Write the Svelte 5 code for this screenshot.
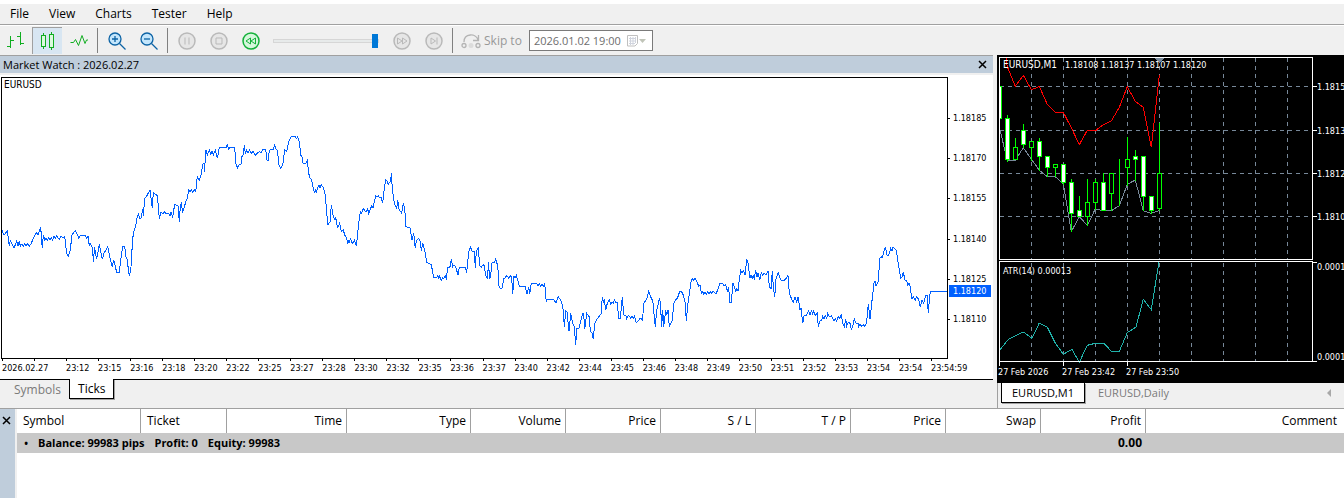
<script>
  // Traced samples, three units to a pixel, each run with its own origin.
  const runs = [
    { x: 0, y: 110, pts: '6,361 12,375 22,362 28,408 31,392 42,415 50,392 54,408 58,392 61,408 66,402 70,408 74,402 78,408 82,402 88,408 94,400 103,378 110,368 114,374 122,352 127,415 130,375 134,390 138,384 142,390 146,384 150,390 154,384 158,390 162,378 166,384 170,378 174,384 178,388 183,378 188,383 194,380 200,430 205,438 211,420 216,374 226,362 230,370 236,384 240,377 256,377 260,384 264,377 268,408 270,400 276,410 281,457 283,410 290,448 298,402 307,447 312,430 323,410 330,443 337,470 341,450 350,487 358,487 362,450 368,410 374,410 378,440 382,448 386,490 389,496 393,470 398,385 402,362 407,350 410,328 415,312 420,328 424,322 428,296 430,318 434,266 440,258 450,240 457,295 460,247 472,257 476,300 478,328 483,305 488,311 493,306 498,311 506,311 510,318 513,307 518,320 524,283 535,288 538,337 541,288 544,282 548,304 553,292 558,272 562,265 566,240 570,247 574,239 578,247 583,240 587,245 592,200 598,210 604,193 608,162 612,160 613,185 618,120 622,135 628,120 632,133 636,122 640,135 646,120 650,140 653,142 658,113 678,113 682,104 686,117 690,113 704,113 708,163 713,174 718,163 724,162 726,140 730,134 733,104 736,130 740,120 744,130 748,120 754,130 760,124 766,136 772,130 778,125 783,128 788,119 797,119 801,150 805,150 808,122 814,118 820,118 824,104 828,118 832,120 837,165 842,174 848,165 854,120 860,125 866,95 872,82 878,78 886,80 890,86 893,80 898,95 902,135 906,140 909,160 918,160 922,152 926,190 930,205 935,210 940,235 943,247 946,240 949,247 954,230 957,226' },
    { x: 320, y: 120, pts: '0,203 4,194 10,203 16,225 20,280 24,314 30,306 34,256 40,290 45,300 47,290 52,322 55,320 59,308 64,336 70,330 74,345 80,355 83,371 86,360 88,370 91,356 96,368 99,370 103,360 109,379 113,340 116,310 121,275 124,280 130,266 136,274 140,274 143,266 146,280 150,270 155,258 159,264 162,250 167,227 171,232 175,228 179,233 184,233 188,250 191,220 197,179 201,182 205,193 212,183 214,160 217,205 221,240 225,255 230,264 233,240 237,268 245,280 250,250 254,265 258,320 270,323 276,360 281,338 286,385 289,362 296,355 301,366 304,393 308,370 314,390 320,427 334,434 341,472 350,474 353,467 356,475 359,467 364,481 368,474 372,475 376,468 379,475 383,443 391,440 394,418 398,440 402,434 408,443 414,466 418,442 436,443 440,458 446,395 452,380 456,394 463,394 466,443 469,392 475,385 479,438 484,442 489,434 493,438 497,466 502,474 506,426 508,475 511,474 516,428 524,426 527,418 530,430 533,430 536,495 541,506 547,504 551,475 556,474 560,466 566,474 570,467 575,472 578,523 582,468 585,475 589,466 594,482 598,500 616,500 621,523 626,500 629,523 634,490 650,491 654,499 658,491 662,499 666,491 670,499 674,491 679,547 682,538 702,540 708,548 715,530 720,538 725,548 730,572 733,620 737,572 741,575 747,634 752,580 758,610 763,620 767,676 770,625 777,625 782,605 788,580 791,582 794,628 800,580 804,586 808,590 811,634 816,640 820,658 824,610 832,596 844,580 847,530 850,548 853,536 857,570 862,550 868,540 872,553 876,546 880,550 883,540 887,548 892,548 896,595 901,595 907,530 911,585 918,587 920,596 924,587 928,588 932,595 936,587 940,595 943,588 949,608 954,604 960,595 966,598 967,604 972,548 980,538' },
    { x: 640, y: 220, pts: '26,214 35,238 38,240 43,290 46,320 50,270 58,238 61,245 65,320 68,270 71,320 77,270 80,285 84,270 88,320 92,312 97,300 101,250 107,238 112,236 119,214 124,214 130,225 136,250 139,304 143,255 149,215 154,180 158,176 161,182 165,175 170,185 176,198 180,195 184,220 188,215 191,222 195,215 199,222 203,215 207,222 211,215 215,220 220,214 228,222 233,210 240,190 248,190 252,197 257,193 262,213 266,202 269,247 274,247 279,190 283,200 287,214 290,206 294,214 298,180 302,152 306,158 311,152 315,166 320,118 325,130 329,175 333,166 337,174 340,168 343,175 347,151 351,170 354,158 359,180 364,158 368,167 372,158 378,165 384,152 388,200 393,206 397,152 400,200 404,230 408,178 415,158 420,175 424,181 432,181 439,174 444,166 448,218 454,235 460,247 465,230 470,246 474,230 480,270 483,264 488,310 492,288 498,287 506,272 510,284 514,272 518,282 521,272 526,286 532,280 535,320 540,302 545,300 548,288 552,296 556,288 560,296 563,280 568,290 574,288 582,303 586,295 590,303 595,290 600,295 604,282 608,310 613,320 617,296 620,318 625,306 630,310 634,328 638,320 643,296 648,310 654,310 656,320 660,312 665,320 670,313 674,320 678,312 680,305 685,252 690,297 695,250 702,190 705,182 708,198 714,185 720,115 724,110 726,115 730,102 736,80 742,108 746,106 752,85 756,92 759,80 762,84 768,90 772,110 777,145 782,175 786,172 790,157 795,180 800,182 803,195 807,190 810,197 816,238 820,230 826,240 830,230 836,238 841,262 846,240 851,250 857,225 861,225 865,280 869,225 873,214 922,214' }
  ];
  const place = (pts, dx, dy) =>
    pts.split(' ').map((p) => {
      const [x, y] = p.split(',').map(Number);
      return `${(x / 3 + dx).toFixed(1)},${(y / 3 + dy).toFixed(1)}`;
    }).join(' ');
  const tickLine = runs.map((r) => place(r.pts, r.x - 2, r.y - 78)).join(' ');

  const prices = [
    ['1.18185', 41], ['1.18170', 81], ['1.18155', 121], ['1.18140', 162], ['1.18125', 202], ['1.18110', 242]
  ];
  const times = ['2026.02.27', '', '23:12', '23:15', '23:16', '23:18', '23:20', '23:22', '23:25', '23:27', '23:28', '23:30', '23:32', '23:35', '23:36', '23:37', '23:40', '23:42', '23:44', '23:45', '23:46', '23:48', '23:49', '23:50', '23:51', '23:52', '23:53', '23:54', '23:54', '23:54:59'];

  // [bodyTop, bodyBottom, wickTop, wickBottom, bearish]
  const candles = [
    [31, 63, 31, 63, 1], [63, 104, 60, 106, 1], [92, 104, 83, 104, 0], [75, 89, 69, 92, 1], [86, 92, 86, 105, 0],
    [86, 101, 83, 115, 1], [101, 112, 101, 121, 1], [109, 112, 109, 121, 0], [109, 127, 109, 129, 1], [127, 158, 124, 176, 1],
    [155, 161, 141, 161, 1], [147, 161, 124, 170, 0], [127, 147, 124, 154, 0], [127, 155, 118, 155, 1], [118, 138, 118, 155, 0],
    [118, 118, 104, 150, 0], [104, 112, 82, 130, 0], [101, 104, 95, 125, 1], [101, 141, 101, 155, 1], [141, 155, 141, 158, 1], [118, 153, 68, 155, 0]
  ];
  const upper = place('48,25 52,50 76,109 100,76 124,119 136,115 148,109 172,163 196,187 220,187 244,233 268,284 292,241 318,241 340,224 364,213 388,172 412,110 436,154 460,172 484,292 508,76', -7, -5);
  const lower = place('30,240 52,331 76,331 100,293 148,361 172,380 196,380 220,401 244,545 268,500 292,526 316,477 340,482 364,482 388,467 412,403 436,390 460,482 484,490 508,482', -7, -5);
  const atr = place('28,287 54,254 100,231 126,250 148,204 172,216 196,264 220,298 246,283 268,322 292,271 316,265 342,265 364,289 388,289 412,233 438,216 460,133 484,164 507,20', -7, 200);
  const gridX = [34, 66, 98, 130, 162, 194, 226, 258, 290];
  const gridY = [[31, '1.1815'], [75, '1.1813'], [118, '1.1812'], [161, '1.1810']];

  const menus = ['File', 'View', 'Charts', 'Tester', 'Help'];
  const columns = ['Symbol', 'Ticket', 'Time', 'Type', 'Volume', 'Price', 'S / L', 'T / P', 'Price', 'Swap', 'Profit', 'Comment'];
  let speed = $state(100);
  let skipTo = $state('2026.01.02 19:00');
</script>

<div class="app">
  <nav class="menu">
    {#each menus as m}<button>{m}</button>{/each}
  </nav>

  <div class="toolbar">
    <button class="tool" aria-label="Bar chart">
      <svg width="20" height="20" viewBox="0 0 20 20" class="green crisp"><path d="M4.500 5v12M1 15.500h3M5 9.500h3M14.500 1v13M11 5.500h3M15 12.500h3" /></svg>
    </button>
    <button class="tool active" aria-label="Candlesticks">
      <svg width="20" height="20" viewBox="0 0 20 20" class="green crisp body"><path d="M5.500 2v3M5.500 15v3M3.500 4.500h4v11h-4zM13.500 1v3M13.500 16v3M11.500 3.500h4v13h-4z" /></svg>
    </button>
    <button class="tool" aria-label="Line chart">
      <svg width="20" height="20" viewBox="0 0 20 20" class="green"><path d="M1.500 11.500h3l2-3 3 6 3.500-10 3 8 1.500-3.500h1.500" /></svg>
    </button>
    <span class="sep"></span>
    {#each ['Zoom in', 'Zoom out'] as label, i}
      <button class="tool" aria-label={label}>
        <svg width="20" height="20" viewBox="0 0 20 20" class="zoom">
          <path d="M12.500 12.500l6 6" />
          <circle cx="8" cy="8" r="6" />
          <path d={i ? 'M5 8h6' : 'M5 8h6M8 5v6'} />
        </svg>
      </button>
    {/each}
    <span class="sep"></span>
    <button class="tool" aria-label="Pause">
      <svg width="20" height="20" viewBox="0 0 20 20" class="round"><circle cx="10" cy="10" r="8" /><path d="M8 6.500v7M12 6.500v7" /></svg>
    </button>
    <button class="tool" aria-label="Stop">
      <svg width="20" height="20" viewBox="0 0 20 20" class="round"><circle cx="10" cy="10" r="8" /><path d="M7 7h6v6H7z" /></svg>
    </button>
    <button class="tool" aria-label="Slower">
      <svg width="20" height="20" viewBox="0 0 20 20" class="round on"><circle cx="10" cy="10" r="8" /><path d="M9.500 7v6L5 10zM14.500 7v6L10 10z" /></svg>
    </button>
    <input class="speed" type="range" min="0" max="100" bind:value={speed} aria-label="Speed" />
    <button class="tool" aria-label="Faster">
      <svg width="20" height="20" viewBox="0 0 20 20" class="round"><circle cx="10" cy="10" r="8" /><path d="M5.500 7v6l4.500-3zM10.500 7v6l4.500-3z" /></svg>
    </button>
    <button class="tool" aria-label="To the end">
      <svg width="20" height="20" viewBox="0 0 20 20" class="round"><circle cx="10" cy="10" r="8" /><path d="M7 7v6l4.500-3zM13 6.500v7" /></svg>
    </button>
    <span class="sep"></span>
    <label class="skip" for="skip-to">
      <svg width="20" height="16" viewBox="0 0 20 16"><circle cx="3" cy="12.500" r="2" /><circle cx="17" cy="12.500" r="2" /><circle cx="10" cy="12.500" r="2.500" class="dot" /><path d="M3 9c0-9 12-9 14-2M12 7.500h5.500V2" /></svg>
      <span>Skip to</span>
    </label>
    <div class="date">
      <input id="skip-to" type="text" bind:value={skipTo} />
      <button aria-label="Open calendar">
        <svg width="22" height="14" viewBox="0 0 22 14"><path d="M1.500 1.500h10v8l-2.500 2.500h-7.500z" fill="#fff" stroke="#c0c0c0" /><path d="M3 4.500h7M3 7h7M3 9.500h6M4.500 3v8M7 3v8M9.500 3v6" stroke="#d0d4de" fill="none" /><path d="M13 5h7l-3.500 4z" fill="#c0c4b8" /></svg>
      </button>
    </div>
  </div>

  <main>
    <section class="watch">
      <header>
        <span>Market Watch : 2026.02.27</span>
        <button class="close" aria-label="Close Market Watch"><svg width="10" height="10" viewBox="0 0 10 10"><path d="M1 1l7 7M8 1L1 8" /></svg></button>
      </header>
      <div class="ticks">
        <div class="plot">
          <svg viewBox="0 0 945 280" preserveAspectRatio="none"><polyline points={tickLine} /></svg>
          <span class="pair">EURUSD</span>
        </div>
        <div class="prices">
          {#each prices as [p, y]}<span style:top="{y}px">{p}</span>{/each}
          <span class="last" style:top="214px">1.18120</span>
        </div>
        <div class="times">
          {#each times as t}<span>{t}</span>{/each}
        </div>
      </div>
      <div class="tabs">
        <button>Symbols</button>
        <button class="on">Ticks</button>
      </div>
    </section>

    <section class="chart">
      <div class="canvas">
        <svg width="400" height="328" viewBox="0 0 400 328">
          <g class="grid">
            {#each gridX as x}<path d="M{x}.500 3v201M{x}.500 208v99" />{/each}
            {#each gridY as [y]}<path d="M3 {y}.500h312" />{/each}
          </g>
          <polyline points={lower} stroke="#778899" />
          {#each candles as [t, b, wt, wb, bear], i}
            {@const x = 2 + i * 8}
            {#if i === 0}
              <rect x="2.500" y="31.500" width="2" height="32" fill="#fff" stroke="#0f0" />
            {:else}
              <path d="M{x}.500 {wt}V{wb + 1}" stroke="#0f0" />
              <rect x="{x - 2}.500" y="{t}.500" width="4" height={b - t} fill={bear ? '#fff' : '#000'} stroke="#0f0" />
            {/if}
          {/each}
          <polyline points={upper} stroke="#f00" />
          <polyline points={atr} stroke="#20b2aa" />
          <path d="M158 3h9l-4.500 5z" fill="#778899" />
          <g class="frame">
            <rect x="2.500" y="2.500" width="313" height="202" />
            <rect x="2.500" y="206.500" width="313" height="100" />
            {#each gridY as [y]}<path d="M316 {y}.500h4" />{/each}
            <path d="M316 207.500h4M316 306.500h4M2.500 307v4M66.500 307v4M130.500 307v4" />
          </g>
          <text x="6" y="13" class="name">EURUSD,M1</text>
          <text x="68" y="13">1.18108</text>
          <text x="104" y="13">1.18137</text>
          <text x="140" y="13">1.18107</text>
          <text x="176" y="13">1.18120</text>
          <text x="6" y="219">ATR(14) 0.00013</text>
          {#each gridY as [y, p]}<text x="320" y={y + 4}>{p}</text>{/each}
          <text x="320" y="215">0.0001</text>
          <text x="320" y="305">0.0001</text>
          <text x="1" y="320">27 Feb 2026</text>
          <text x="65" y="320">27 Feb 23:42</text>
          <text x="129" y="320">27 Feb 23:50</text>
        </svg>
      </div>
      <div class="tabs">
        <button class="on">EURUSD,M1</button>
        <button>EURUSD,Daily</button>
        <button class="scroll" aria-label="Scroll tabs left"><svg width="4" height="8" viewBox="0 0 4 8"><path d="M4 0v8L0 4z" fill="#a8a8a8" /></svg></button>
      </div>
    </section>
  </main>

  <section class="trade">
    <div class="side"><button class="close" aria-label="Close Toolbox"><svg width="10" height="10" viewBox="0 0 10 10"><path d="M1 1l7 7M8 1L1 8" /></svg></button></div>
    <table>
      <colgroup>{#each columns as _, i}<col class="c{i}" />{/each}</colgroup>
      <thead><tr>{#each columns as c}<th>{c}</th>{/each}</tr></thead>
      <tbody>
        <tr>
          <td colspan="10"><div class="balance"><span class="dot">•</span><span>Balance: 99983 pips</span><span>Profit: 0</span><span>Equity: 99983</span></div></td>
          <td>0.00</td>
          <td></td>
        </tr>
      </tbody>
    </table>
  </section>
</div>

<style>
  :global(body) { background: #fff; }
  .app {
    min-height: 100vh; box-sizing: border-box; padding-top: 4px; display: flex; flex-direction: column;
    font: 12px/16px "Open Sans", "Noto Sans", sans-serif; color: #000; background: #fff;
  }
  button { font: inherit; color: inherit; background: none; border: 0; padding: 0; margin: 0; display: block; }
  svg { display: block; }
  .crisp, .plot polyline, .canvas svg { shape-rendering: crispEdges; }

  .menu { display: flex; gap: 20px; height: 20px; padding: 0 10px; background: #f0f0f0; border-bottom: 1px solid #a0a0a0; }
  .toolbar { display: flex; align-items: center; height: 29px; background: #f0f0f0; border-top: 1px solid #fff; overflow: hidden; }
  .tool { flex: none; width: 32px; height: 27px; display: grid; place-items: center; }
  .tool.active { box-sizing: border-box; width: 30px; margin-right: 1px; background: #d8e6f2; border: 1px solid #a0a0a0; border-width: 1px 0 0 1px; }
  .sep { flex: none; width: 1px; height: 25px; margin: 0 3px 0 2px; background: #808080; }
  .green { fill: none; stroke: #10ad20; }
  .green.body { fill: #dcfade; }
  .zoom { fill: none; stroke: #0c63a5; stroke-width: 1.300; }
  .zoom circle { fill: #c4e6fc; }
  .round { fill: none; stroke: #b9b9b9; }
  .round circle { fill: #e6e6e6; stroke-width: 1.500; }
  .round.on { stroke: #14b13a; }
  .round.on circle { fill: #d5f7dc; }
  .speed { appearance: none; flex: none; width: 106px; height: 20px; margin: 0 7px 0 6px; background: none; }
  .speed::-webkit-slider-runnable-track { height: 4px; background: #e7eaea; border: 1px solid #d6d6d6; box-sizing: border-box; }
  .speed::-webkit-slider-thumb { appearance: none; width: 6px; height: 14px; margin-top: -6px; background: #0078d7; }
  .skip { display: flex; align-items: center; gap: 3px; padding: 0 7px 0 5px; color: #989898; white-space: nowrap; }
  .skip svg { fill: none; stroke: #b4b4b4; stroke-width: 1.300; }
  .skip .dot { fill: #dcdcdc; stroke: none; }
  .date { display: flex; align-items: center; box-sizing: border-box; width: 124px; height: 21px; background: #fff; border: 1px solid #7a7a7a; }
  .date input { flex: 1; min-width: 0; border: 0; outline: 0; padding: 0 0 0 4px; font: inherit; font-size: 11px; color: #6d6d6d; background: none; }
  .date button { margin-right: 4px; }

  main { display: flex; background: #f0f0f0; border-bottom: 1px solid #a0a0a0; }
  .watch { flex: 993 1 0; min-width: 0; margin-right: 4px; }
  .watch header { display: flex; align-items: center; justify-content: space-between; height: 17px; padding: 0 5px 0 3px; border-top: 1px solid #a0a0a0; background: #bfcddb; font-size: 11px; }
  .close svg { fill: none; stroke: #000; stroke-width: 1.500; }
  .ticks {
    display: grid; grid-template-columns: 1fr 45px; margin-top: 2px; padding: 2px 0 0 1px; background: #fff;
    font: 9px/12px "DejaVu Sans Condensed", "DejaVu Sans", sans-serif; font-stretch: condensed; border-bottom: 1px solid #000;
  }
  .plot { position: relative; border: 1px solid #000; height: 280px; }
  .plot svg { width: 100%; height: 100%; }
  .plot polyline { fill: none; stroke: #0060ff; vector-effect: non-scaling-stroke; }
  .pair { position: absolute; left: 2px; top: 1px; font-size: 10px; }
  .prices { position: relative; }
  .prices span { position: absolute; left: 0; right: 2px; transform: translateY(-50%); padding-left: 5px; }
  .prices span::before { content: ""; position: absolute; left: 0; top: 6px; width: 2px; height: 1px; background: #000; }
  .prices .last { left: 1px; padding-left: 4px; background: #0060ff; color: #fff; }
  .prices .last::before { display: none; }
  .times { grid-column: 1 / -1; display: grid; grid-template-columns: repeat(29, 1fr) 63px; height: 20px; }
  .times span { position: relative; padding: 3px 0 0 1px; min-width: 0; white-space: nowrap; }
  .times span::before { content: ""; position: absolute; left: 1px; top: 0; width: 1px; height: 2px; background: #000; }

  .tabs { display: flex; color: #7a7a7a; height: 28px; align-items: flex-start; }
  .tabs button { height: 20px; padding: 0 8px; }
  .tabs .on { color: #000; background: #fff; border: 1px solid #000; border-top: 0; box-sizing: border-box; box-shadow: 1px 1px #a0a0a0; }
  .watch .tabs { padding-left: 6px; }
  .watch .tabs .on { margin-top: -1px; }
  .chart { flex: 347 1 0; min-width: 0; }
  .canvas { background: #000; overflow: hidden; height: 328px; }
  .canvas svg { fill: none; }
  .canvas text { fill: #fff; font: 9px "DejaVu Sans Condensed", "DejaVu Sans", sans-serif; font-stretch: condensed; white-space: pre; }
  .canvas .name { font-size: 10px; }
  .grid { stroke: #778899; stroke-dasharray: 4 4; }
  .frame { stroke: #fff; }
  .chart .tabs { height: 25px; padding-left: 3px; gap: 3px; border-left: 1px solid #a0a0a0; font-size: 11px; }
  .chart .tabs button { padding: 0 10px; }
  .chart .tabs .scroll { margin-left: auto; padding: 0 13px 0 0; display: grid; align-items: center; }

  .trade { flex: 1; display: flex; }
  .side { flex: none; width: 15px; background: #bfcddb; border-right: 2px solid #f0f0f0; }
  .side .close { margin: 7px 0 0 2px; }
  table { flex: 1; align-self: flex-start; border-collapse: separate; border-spacing: 0; table-layout: fixed; width: 100%; }
  th { height: 24px; padding: 0 4px; font-weight: 400; text-align: right; border-right: 1px solid #a0a0a0; white-space: nowrap; }
  th:nth-child(-n + 2) { text-align: left; padding-left: 6px; }
  th:last-child { border: 0; padding-right: 7px; }
  td { height: 20px; padding: 0 4px; background: #c8c8c8; font-weight: 700; text-align: right; white-space: nowrap; }
  .balance { display: flex; gap: 10px; padding-left: 2px; font-size: 11px; }
  .balance .dot { width: 5px; font-size: 10px; }
  .c0, .c3 { width: 124px; }
  .c1 { width: 86px; }
  .c2 { width: 120px; }
  .c4, .c5, .c6, .c7, .c8, .c9 { width: 95px; }
  .c10 { width: 105px; }
</style>
